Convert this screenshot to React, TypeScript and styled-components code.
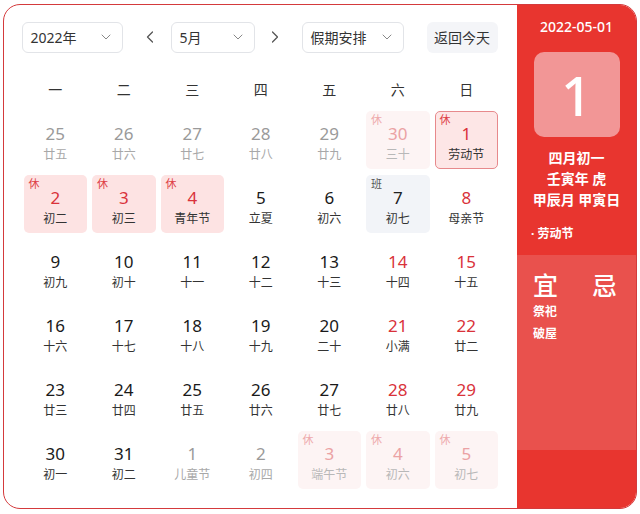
import React from "react";
import styled, { createGlobalStyle } from "styled-components";
import { ChevronDown, ChevronLeft, ChevronRight } from "lucide-react";

const GlobalStyle = createGlobalStyle`
  html, body {
    margin: 0;
    padding: 0;
    background: #ffffff;
  }
  body {
    font-family: "Noto Sans", "Noto Sans CJK SC", sans-serif;
  }
`;

const Page = styled.div`
  width: 640px;
  height: 514px;
  padding: 4px 3px 0 3px;
  box-sizing: border-box;
`;

const Frame = styled.div`
  width: 634px;
  height: 505px;
  box-sizing: border-box;
  border: 1.5px solid #d43a3c;
  border-radius: 17px;
  overflow: hidden;
  display: flex;
  background: #fff;
`;

const Main = styled.div`
  flex: 1;
  padding: 16.5px 0 0 17.5px;
  display: flex;
  flex-direction: column;
`;

const Toolbar = styled.div`
  display: flex;
  align-items: center;
  height: 31px;
`;

const Select = styled.div<{ $w: number; $ml?: number }>`
  width: ${(p) => p.$w}px;
  margin-left: ${(p) => p.$ml ?? 0}px;
  height: 31px;
  box-sizing: border-box;
  border: 1px solid #e2e4e8;
  border-radius: 6px;
  display: flex;
  align-items: center;
  justify-content: space-between;
  padding: 0 8px 0 8px;
  font-size: 14px;
  color: #333;
`;

const ArrowBtn = styled.div<{ $ml: number }>`
  width: 24px;
  height: 31px;
  margin-left: ${(p) => p.$ml}px;
  display: flex;
  align-items: center;
  justify-content: center;
  color: #555;
`;

const TodayBtn = styled.div`
  margin-left: 23px;
  width: 71px;
  height: 31px;
  border-radius: 6px;
  background: #f4f5f8;
  display: flex;
  align-items: center;
  justify-content: center;
  font-size: 14px;
  color: #333;
`;

const Grid = styled.div`
  margin-left: 2px;
  display: grid;
  grid-template-columns: repeat(7, 63.5px);
  column-gap: 5px;
`;

const WeekRow = styled(Grid)`
  margin-top: 27px;
  height: 20px;
  margin-bottom: 11px;
`;

const WeekLabel = styled.div`
  text-align: center;
  font-size: 14px;
  line-height: 20px;
  color: #333;
`;

const DayGrid = styled(Grid)`
  grid-auto-rows: 58px;
  row-gap: 6px;
`;

type Kind =
  | "normal"
  | "other"
  | "holiday"
  | "fadedHoliday"
  | "selected"
  | "work";

const cellBg: Record<Kind, string> = {
  normal: "transparent",
  other: "transparent",
  holiday: "#fde3e3",
  fadedHoliday: "#fdf4f4",
  selected: "#fde6e6",
  work: "#f2f4f8",
};

const Cell = styled.div<{ $kind: Kind }>`
  position: relative;
  box-sizing: border-box;
  border-radius: 5px;
  background: ${(p) => cellBg[p.$kind]};
  border: ${(p) =>
    p.$kind === "selected" ? "1.5px solid #e7898c" : "1.5px solid transparent"};
  display: flex;
  flex-direction: column;
  align-items: center;
  padding-top: 12px;
`;

const Num = styled.div<{ $color: string }>`
  font-size: 17px;
  line-height: 20px;
  color: ${(p) => p.$color};
`;

const Lunar = styled.div<{ $color: string }>`
  margin-top: 3px;
  font-size: 12px;
  line-height: 16px;
  color: ${(p) => p.$color};
`;

const Badge = styled.span<{ $color: string }>`
  position: absolute;
  left: 4px;
  top: 1px;
  font-size: 11px;
  line-height: 14px;
  color: ${(p) => p.$color};
`;

const Side = styled.div`
  width: 119px;
  display: flex;
  flex-direction: column;
  background: #e8352f;
  color: #fff;
`;

const SideTop = styled.div`
  height: 250px;
  display: flex;
  flex-direction: column;
  align-items: center;
  padding-top: 13px;
  box-sizing: border-box;
`;

const DateText = styled.div`
  font-size: 14px;
  line-height: 18px;
  font-weight: 500;
`;

const BigDay = styled.div`
  margin-top: 16px;
  width: 86px;
  height: 85px;
  border-radius: 10px;
  background: #f29696;
  display: flex;
  align-items: center;
  justify-content: center;
  font-size: 54px;
  font-family: "Noto Sans", sans-serif;
  font-weight: 500;
  line-height: 1;
`;

const InfoLine = styled.div<{ $mt?: number }>`
  margin-top: ${(p) => p.$mt ?? 0}px;
  font-size: 14px;
  line-height: 21px;
  font-weight: 700;
`;

const Festival = styled.div`
  align-self: flex-start;
  margin: 16px 0 0 14px;
  font-size: 12px;
  line-height: 16px;
  font-weight: 700;
`;

const SideMid = styled.div`
  height: 195px;
  background: #e9514d;
  padding: 16px 0 0 16px;
  box-sizing: border-box;
`;

const YiJi = styled.div`
  display: flex;
  gap: 34px;
  font-size: 25px;
  line-height: 28px;
  font-weight: 500;
`;

const Item = styled.div<{ $mt?: number }>`
  margin-top: ${(p) => p.$mt ?? 0}px;
  font-size: 12px;
  line-height: 22px;
  font-weight: 700;
`;

const SideBottom = styled.div`
  flex: 1;
`;

type Day = {
  n: number;
  l: string;
  kind: Kind;
  red?: boolean;
  badge?: "休" | "班";
};

const days: Day[] = [
  { n: 25, l: "廿五", kind: "other" },
  { n: 26, l: "廿六", kind: "other" },
  { n: 27, l: "廿七", kind: "other" },
  { n: 28, l: "廿八", kind: "other" },
  { n: 29, l: "廿九", kind: "other" },
  { n: 30, l: "三十", kind: "fadedHoliday", badge: "休" },
  { n: 1, l: "劳动节", kind: "selected", badge: "休" },
  { n: 2, l: "初二", kind: "holiday", badge: "休" },
  { n: 3, l: "初三", kind: "holiday", badge: "休" },
  { n: 4, l: "青年节", kind: "holiday", badge: "休" },
  { n: 5, l: "立夏", kind: "normal" },
  { n: 6, l: "初六", kind: "normal" },
  { n: 7, l: "初七", kind: "work", badge: "班" },
  { n: 8, l: "母亲节", kind: "normal", red: true },
  { n: 9, l: "初九", kind: "normal" },
  { n: 10, l: "初十", kind: "normal" },
  { n: 11, l: "十一", kind: "normal" },
  { n: 12, l: "十二", kind: "normal" },
  { n: 13, l: "十三", kind: "normal" },
  { n: 14, l: "十四", kind: "normal", red: true },
  { n: 15, l: "十五", kind: "normal", red: true },
  { n: 16, l: "十六", kind: "normal" },
  { n: 17, l: "十七", kind: "normal" },
  { n: 18, l: "十八", kind: "normal" },
  { n: 19, l: "十九", kind: "normal" },
  { n: 20, l: "二十", kind: "normal" },
  { n: 21, l: "小满", kind: "normal", red: true },
  { n: 22, l: "廿二", kind: "normal", red: true },
  { n: 23, l: "廿三", kind: "normal" },
  { n: 24, l: "廿四", kind: "normal" },
  { n: 25, l: "廿五", kind: "normal" },
  { n: 26, l: "廿六", kind: "normal" },
  { n: 27, l: "廿七", kind: "normal" },
  { n: 28, l: "廿八", kind: "normal", red: true },
  { n: 29, l: "廿九", kind: "normal", red: true },
  { n: 30, l: "初一", kind: "normal" },
  { n: 31, l: "初二", kind: "normal" },
  { n: 1, l: "儿童节", kind: "other" },
  { n: 2, l: "初四", kind: "other" },
  { n: 3, l: "端午节", kind: "fadedHoliday", badge: "休" },
  { n: 4, l: "初六", kind: "fadedHoliday", badge: "休" },
  { n: 5, l: "初七", kind: "fadedHoliday", badge: "休" },
];

const weekdays = ["一", "二", "三", "四", "五", "六", "日"];

const colorsFor = (d: Day) => {
  switch (d.kind) {
    case "other":
      return { num: "#9a9a9a", lunar: "#a8a8a8", badge: "#aaa" };
    case "fadedHoliday":
      return { num: "#eba2a4", lunar: "#b8b8b8", badge: "#eeaaac" };
    case "holiday":
    case "selected":
      return { num: "#d9323a", lunar: "#333", badge: "#de4046" };
    case "work":
      return { num: "#222", lunar: "#333", badge: "#555" };
    default:
      return { num: d.red ? "#d9323a" : "#1a1a1a", lunar: "#333", badge: "#333" };
  }
};

const App = () => {
  return (
    <Page>
      <GlobalStyle />
      <Frame>
        <Main>
          <Toolbar>
            <Select $w={101}>
              2022年
              <ChevronDown size={16} strokeWidth={1.5} color="#888" />
            </Select>
            <ArrowBtn $ml={15}>
              <ChevronLeft size={20} strokeWidth={1.5} />
            </ArrowBtn>
            <Select $w={84} $ml={9}>
              5月
              <ChevronDown size={16} strokeWidth={1.5} color="#888" />
            </Select>
            <ArrowBtn $ml={8}>
              <ChevronRight size={20} strokeWidth={1.5} />
            </ArrowBtn>
            <Select $w={102} $ml={15}>
              假期安排
              <ChevronDown size={16} strokeWidth={1.5} color="#888" />
            </Select>
            <TodayBtn>返回今天</TodayBtn>
          </Toolbar>
          <WeekRow>
            {weekdays.map((w) => (
              <WeekLabel key={w}>{w}</WeekLabel>
            ))}
          </WeekRow>
          <DayGrid>
            {days.map((d, i) => {
              const c = colorsFor(d);
              return (
                <Cell key={i} $kind={d.kind}>
                  {d.badge && <Badge $color={c.badge}>{d.badge}</Badge>}
                  <Num $color={c.num}>{d.n}</Num>
                  <Lunar $color={c.lunar}>{d.l}</Lunar>
                </Cell>
              );
            })}
          </DayGrid>
        </Main>
        <Side>
          <SideTop>
            <DateText>2022-05-01</DateText>
            <BigDay>1</BigDay>
            <InfoLine $mt={10}>四月初一</InfoLine>
            <InfoLine>壬寅年 虎</InfoLine>
            <InfoLine>甲辰月 甲寅日</InfoLine>
            <Festival>· 劳动节</Festival>
          </SideTop>
          <SideMid>
            <YiJi>
              <span>宜</span>
              <span>忌</span>
            </YiJi>
            <Item $mt={2}>祭祀</Item>
            <Item>破屋</Item>
          </SideMid>
          <SideBottom />
        </Side>
      </Frame>
    </Page>
  );
};

export default App;
